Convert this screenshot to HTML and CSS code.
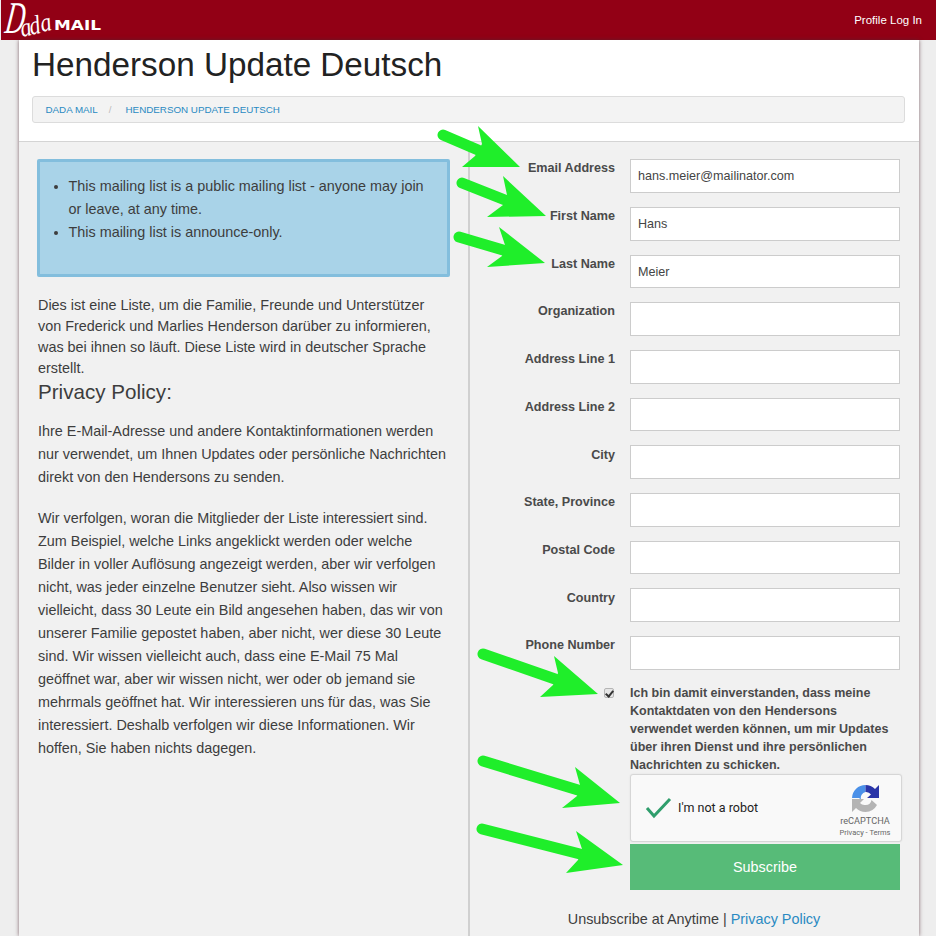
FILE: index.html
```html
<!DOCTYPE html>
<html lang="en">
<head>
    <meta charset="UTF-8">
    <title>Henderson Update Deutsch</title>
    <link rel="stylesheet" href="styles.css">
</head>
<body>
    <div class="top-bar">
        <a class="logo" href="#">
            <svg width="100" height="40" viewBox="0 0 100 40">
                <text class="logo-d" transform="translate(3 33) skewX(-8) scale(0.7 1.2)">D</text>
                <text class="logo-a" transform="translate(21 37) rotate(-12) scale(1 1.2)">a</text>
                <text class="logo-a" transform="translate(30 35) rotate(-12) scale(1 1.2)">d</text>
                <text class="logo-a" transform="translate(41 32) rotate(-12) scale(1 1.2)">a</text>
                <text x="53" y="30" class="logo-mail" textLength="47" lengthAdjust="spacingAndGlyphs">MAIL</text>
            </svg>
        </a>
        <div class="top-links"><a href="#">Profile</a> <a href="#">Log In</a></div>
    </div>

    <div class="container">
        <div class="page-head">
            <h1>Henderson Update Deutsch</h1>
            <ul class="breadcrumbs">
                <li><a href="#">Dada Mail</a></li>
                <li class="sep">/</li>
                <li><a href="#">Henderson Update Deutsch</a></li>
            </ul>
        </div>

        <div class="main">
            <div class="col-left">
                <div class="callout">
                    <ul>
                        <li>This mailing list is a public mailing list - anyone may join or leave, at any time.</li>
                        <li>This mailing list is announce-only.</li>
                    </ul>
                </div>
                <p class="intro">Dies ist eine Liste, um die Familie, Freunde und Unterstützer von Frederick und Marlies Henderson darüber zu informieren, was bei ihnen so läuft. Diese Liste wird in deutscher Sprache erstellt.</p>
                <h3>Privacy Policy:</h3>
                <p>Ihre E-Mail-Adresse und andere Kontaktinformationen werden nur verwendet, um Ihnen Updates oder persönliche Nachrichten direkt von den Hendersons zu senden.</p>
                <p>Wir verfolgen, woran die Mitglieder der Liste interessiert sind. Zum Beispiel, welche Links angeklickt werden oder welche Bilder in voller Auflösung angezeigt werden, aber wir verfolgen nicht, was jeder einzelne Benutzer sieht. Also wissen wir vielleicht, dass 30 Leute ein Bild angesehen haben, das wir von unserer Familie gepostet haben, aber nicht, wer diese 30 Leute sind. Wir wissen vielleicht auch, dass eine E-Mail 75 Mal geöffnet war, aber wir wissen nicht, wer oder ob jemand sie mehrmals geöffnet hat. Wir interessieren uns für das, was Sie interessiert. Deshalb verfolgen wir diese Informationen. Wir hoffen, Sie haben nichts dagegen.</p>
            </div>

            <form class="col-right">
                <div class="field"><label>Email Address</label><input type="text" value="hans.meier@mailinator.com"></div>
                <div class="field"><label>First Name</label><input type="text" value="Hans"></div>
                <div class="field"><label>Last Name</label><input type="text" value="Meier"></div>
                <div class="field"><label>Organization</label><input type="text"></div>
                <div class="field"><label>Address Line 1</label><input type="text"></div>
                <div class="field"><label>Address Line 2</label><input type="text"></div>
                <div class="field"><label>City</label><input type="text"></div>
                <div class="field"><label>State, Province</label><input type="text"></div>
                <div class="field"><label>Postal Code</label><input type="text"></div>
                <div class="field"><label>Country</label><input type="text"></div>
                <div class="field"><label>Phone Number</label><input type="text"></div>

                <div class="consent">
                    <div class="consent-box"><input type="checkbox" checked disabled></div>
                    <div class="consent-text">Ich bin damit einverstanden, dass meine Kontaktdaten von den Hendersons verwendet werden können, um mir Updates über ihren Dienst und ihre persönlichen Nachrichten zu schicken.</div>
                </div>

                <div class="captcha">
                    <svg class="captcha-check" width="28" height="22" viewBox="0 0 28 22">
                        <path d="M2 11 L9 19 L25 2" fill="none" stroke="#2f9e6c" stroke-width="3"/>
                    </svg>
                    <span class="captcha-label">I'm not a robot</span>
                    <div class="captcha-brand">
                        <svg width="27" height="27" viewBox="0 0 27 27">
                            <path d="M13.5 0 A13.5 13.5 0 0 0 0 13 L7 13 L9 14.5 A6 6 0 0 1 13.5 7 Z" fill="#4a90e8"/>
                            <path d="M13.5 0 A13.5 13.5 0 0 1 23 4 L27 0 L27 13 L15 13 L19 9.5 A6 6 0 0 0 13.5 7 Z" fill="#2a35a8"/>
                            <path d="M0 14 L0 27 L4 23 A13.5 13.5 0 0 0 13.5 27 A13.5 13.5 0 0 0 25 20 L19.5 15 A6 6 0 0 1 13.5 20 A6 6 0 0 1 8 18 L12 14 Z" fill="#b4b4b4"/>
                        </svg>
                        <div class="captcha-name">reCAPTCHA</div>
                        <div class="captcha-terms">Privacy - Terms</div>
                    </div>
                </div>
                <button type="button" class="subscribe">Subscribe</button>
                <p class="unsub">Unsubscribe at Anytime | <a href="#">Privacy Policy</a></p>
            </form>
        </div>
    </div>

    <!-- green arrows drawn on top of the screenshot -->
    <svg class="arrows" width="936" height="936" viewBox="0 0 936 936">
        <g class="shaft">
            <line x1="443" y1="135" x2="478" y2="150"/>
            <line x1="462" y1="183" x2="505" y2="200"/>
            <line x1="459" y1="237" x2="503" y2="250"/>
            <line x1="483" y1="654" x2="555" y2="679"/>
            <line x1="483" y1="761" x2="578" y2="790"/>
            <line x1="482" y1="829" x2="580" y2="854"/>
        </g>
        <g class="head">
            <polygon points="478,126 520,167 462,167 475,156 482,144"/>
            <polygon points="503,176 546,216 487,217 503,205 507,195"/>
            <polygon points="499,227 545,263 487,267 502,256 505,245"/>
            <polygon points="554,656 598,694 540,697 553,685 558,673"/>
            <polygon points="575,767 620,803 562,808 577,796 580,785"/>
            <polygon points="576,831 623,865 566,873 578,860 582,849"/>
        </g>
    </svg>
</body>
</html>
```

FILE: styles.css
```css
* {
    margin: 0;
    padding: 0;
    box-sizing: border-box;
}
html, body {
    height: 936px;
    overflow: hidden;
}
body {
    position: relative;
    background: #eeeeee;
    font-family: "Liberation Sans", Arial, sans-serif;
    color: #3d3d3d;
}
a {
    color: #2a8ac2;
    text-decoration: none;
}

/* top bar */
.top-bar {
    height: 40px;
    margin-left: 1px;
    background: #920015;
    display: flex;
    justify-content: space-between;
    align-items: center;
    padding-right: 14px;
}
.logo {
    display: block;
    height: 40px;
}
.logo svg {
    overflow: visible;
}
.logo-d {
    font-family: "Liberation Serif", serif;
    font-style: italic;
    font-size: 38px;
    fill: #fff;
}
.logo-a {
    font-family: "Liberation Serif", serif;
    font-style: italic;
    font-size: 22px;
    fill: #fff;
}
.logo-mail {
    font-family: "DejaVu Sans", sans-serif;
    font-weight: bold;
    font-size: 13.6px;
    fill: #fff;
}
.top-links {
    font-size: 11.5px;
}
.top-links a {
    color: #fff;
}

/* page */
.container {
    width: 900px;
    margin-left: 19px;
    height: 896px;
    background: #fff;
    box-shadow: 0 0 4px rgba(80, 40, 50, 0.7);
}
.page-head {
    height: 101px;
    padding: 0 14px 0 13px;
}
h1 {
    font-size: 33.25px;
    font-weight: normal;
    line-height: 50px;
    color: #222;
}
.breadcrumbs {
    list-style: none;
    display: flex;
    align-items: center;
    margin-top: 6px;
    height: 27px;
    padding-left: 12.5px;
    background: #f3f3f3;
    border: 1px solid #dcdcdc;
    border-radius: 3px;
    font-size: 9.8px;
    text-transform: uppercase;
}
.breadcrumbs .sep {
    margin: 0 14px 0 11px;
    color: #bbb;
}
.main {
    display: flex;
    height: 795px;
    background: #f1f1f1;
    border-top: 1px solid #d4d4d4;
}
.col-left {
    width: 451px;
    padding: 17px 18px 0 18px;
    border-right: 2px solid #d0d0d0;
    font-size: 14.4px;
    line-height: 23px;
}
.col-left p, .col-left h3 {
    margin-left: 1px;
}
.callout {
    height: 118px;
    background: #a9d3e8;
    border: 3px solid #83bedd;
    border-radius: 2px;
    padding: 13px 10px 0 28px;
    margin-bottom: 18px;
}
.callout li {
    margin-left: 0.5px;
}
.intro {
    line-height: 21px;
}
h3 {
    margin-top: 1px;
    font-size: 20.6px;
    font-weight: normal;
    line-height: 24px;
    margin-bottom: 16px;
}
.col-left p + p {
    margin-top: 18px;
}

/* form */
.col-right {
    flex: 1;
    padding: 17.3px 0 0 0;
}
.field {
    display: flex;
    height: 33.7px;
    margin-bottom: 14px;
}
.field label {
    width: 145px;
    padding-top: 1.1px;
    text-align: right;
    font-size: 12.6px;
    font-weight: bold;
    line-height: 16px;
    color: #4a4a4a;
}
.field input {
    margin-left: 15px;
    width: 270px;
    height: 100%;
    padding: 0 7px;
    background: #fff;
    border: 1px solid #ccc;
    font-family: inherit;
    font-size: 12.6px;
    color: #444;
}
.consent {
    display: flex;
    margin-top: 0.7px;
}
.consent-box {
    width: 160px;
    padding-top: 4px;
    padding-right: 16px;
    display: flex;
    justify-content: flex-end;
}
.consent-box input {
    appearance: none;
    position: relative;
    width: 10px;
    height: 10px;
    background: #e6e6e6;
    border: 1px solid #b5b5b5;
    border-radius: 2px;
}
.consent-box input::after {
    content: "";
    position: absolute;
    left: 2px;
    top: 0;
    width: 3px;
    height: 6px;
    border: solid #333;
    border-width: 0 2px 2px 0;
    transform: rotate(40deg);
}
.consent-text {
    width: 272px;
    font-size: 12.5px;
    font-weight: bold;
    line-height: 18px;
    color: #4a4a4a;
}
.captcha {
    display: flex;
    align-items: center;
    width: 272px;
    height: 68px;
    margin: 0 0 2px 160px;
    background: #f9f9f9;
    border: 1px solid #d6d6d6;
    border-radius: 3px;
    box-shadow: 0 0 2px rgba(0, 0, 0, 0.08);
}
.captcha-check {
    margin-left: 14px;
}
.captcha-label {
    margin-left: 5px;
    font-family: Roboto, sans-serif;
    font-size: 12.5px;
    color: #222;
}
.captcha-brand {
    margin-left: auto;
    width: 62px;
    margin-right: 5px;
    padding-top: 8px;
    display: flex;
    flex-direction: column;
    align-items: center;
    color: #666;
}
.captcha-name {
    font-family: Roboto, sans-serif;
    font-size: 9.2px;
    line-height: 12px;
    margin-top: 3px;
}
.captcha-terms {
    font-family: Roboto, sans-serif;
    font-size: 7.5px;
    line-height: 12px;
}
.subscribe {
    display: block;
    width: 270px;
    height: 46px;
    margin-left: 160px;
    background: #57bb78;
    border: none;
    color: #fff;
    font-family: inherit;
    font-size: 14.4px;
}
.unsub {
    margin-top: 20px;
    margin-right: 1px;
    text-align: center;
    font-size: 14.4px;
    line-height: 18px;
}

/* arrows */
.arrows {
    position: absolute;
    left: 0;
    top: 0;
    pointer-events: none;
}
.shaft line {
    stroke: #1fee2a;
    stroke-width: 11;
    stroke-linecap: round;
}
.head polygon {
    fill: #1fee2a;
}
```
